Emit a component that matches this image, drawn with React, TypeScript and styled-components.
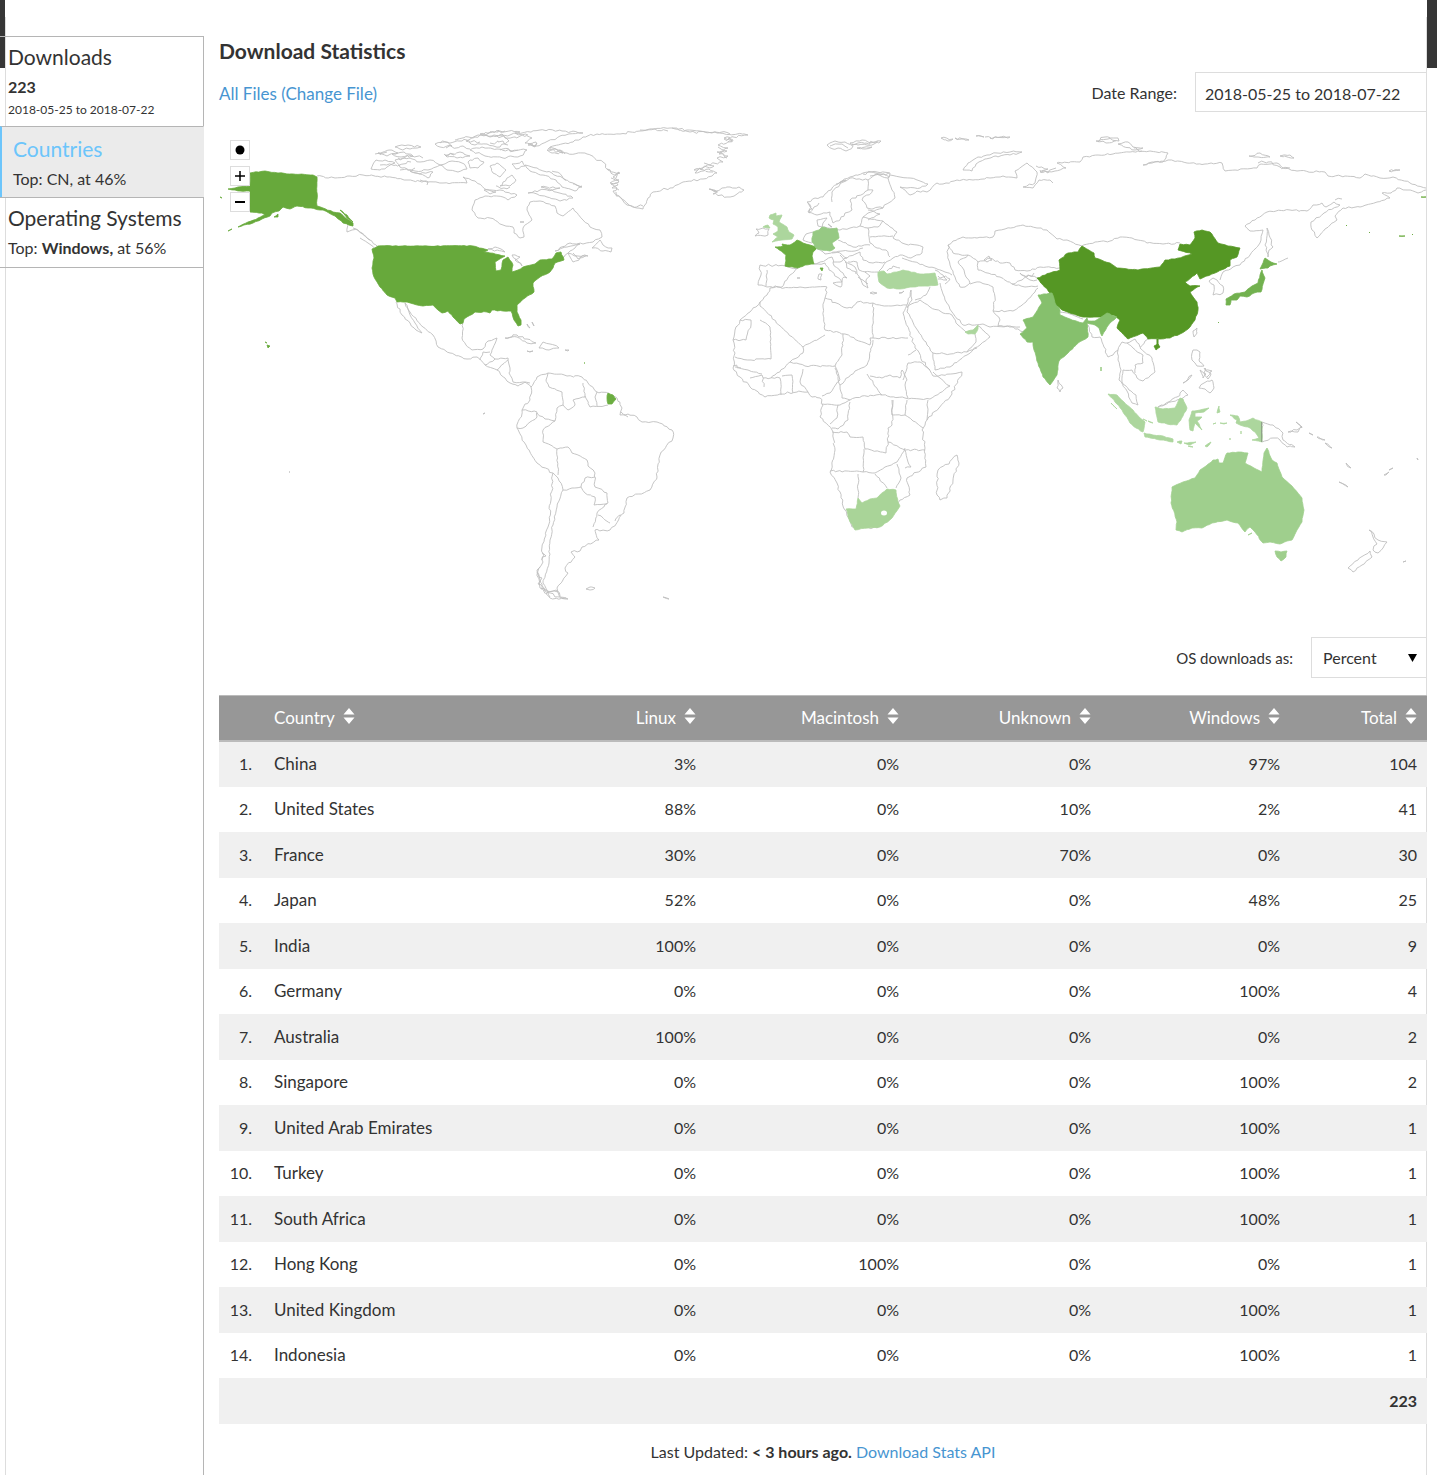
import React from "react";
import styled, { createGlobalStyle } from "styled-components";

const GlobalStyle = createGlobalStyle`
  *, *::before, *::after { box-sizing: border-box; }
  body {
    margin: 0;
    background: #fff;
    color: #333;
    font-family: Lato, "Open Sans", sans-serif;
    font-size: 17px;
    line-height: 24px;
  }
  button, input, select { font: inherit; color: inherit; }
`;

const Page = styled.div`
  min-height: 100vh;
  display: flex;
  padding: 0 10px 0 5px;
  background: linear-gradient(#363636 68px, #fff 68px);
`;

const Sheet = styled.div`
  flex: 1;
  min-width: 0;
  display: flex;
  padding-top: 17px;
  background: #fff;
`;

const Frame = styled.div`
  flex: 1;
  min-width: 0;
  display: flex;
  padding-top: 19px;
  border: solid #ddd;
  border-width: 0 1px;
`;

const Sidebar = styled.nav`
  flex: 0 0 204px;
  margin-left: -6px;
  display: flex;
  flex-direction: column;
`;

const SideItem = styled.a<{ $active?: boolean }>`
  display: block;
  padding: ${(p) => (p.$active ? "9px 0 3px 11px" : "7px 0 4px 8px")};
  border-top: 1px solid #b5b5b5;
  border-right: 1px solid ${(p) => (p.$active ? "#ebebeb" : "#b5b5b5")};
  border-left: ${(p) => (p.$active ? "2px solid #6cc5fb" : "0")};
  background: ${(p) => (p.$active ? "#ebebeb" : "transparent")};
  color: #333;
  text-decoration: none;
`;

const SideTitle = styled.span<{ $active?: boolean }>`
  display: block;
  margin-bottom: 2px;
  font-size: 21px;
  line-height: 26px;
  color: ${(p) => (p.$active ? "#6cc5fb" : "#333")};
`;

const SideText = styled.span`
  display: block;
  font-size: 16px;
  line-height: 30px;
  & > b { font-weight: 700; }
`;

const SideDates = styled.span`
  display: block;
  padding-bottom: 4px;
  font-size: 12px;
  line-height: 16px;
`;

const SideRest = styled.div`
  flex: 1;
  border-top: 1px solid #b5b5b5;
  border-right: 1px solid #b5b5b5;
`;

const Main = styled.main`
  flex: 1;
  min-width: 0;
  margin-right: -1px;
  padding-left: 15px;
`;

const Title = styled.h1`
  margin: 0;
  padding: 3px 0 9px;
  font-size: 21px;
  line-height: 24px;
  font-weight: 700;
`;

const Bar = styled.div<{ $end?: boolean }>`
  display: flex;
  align-items: center;
  justify-content: ${(p) => (p.$end ? "flex-end" : "space-between")};
  margin-bottom: ${(p) => (p.$end ? "17px" : "8px")};
`;

const Link = styled.a`
  color: #4795d1;
  text-decoration: none;
`;

const FileLink = styled(Link)`
  padding-top: 3px;
`;

const Field = styled.label<{ $small?: boolean }>`
  display: flex;
  align-items: center;
  gap: 18px;
  font-size: ${(p) => (p.$small ? "15px" : "16px")};
`;

const FieldName = styled.span`
  padding-top: 2px;
`;

const DateInput = styled.input`
  width: 232px;
  height: 40px;
  padding: 2px 9px 0;
  border: 1px solid #ddd;
  border-radius: 0;
  background: #fff;
  font-size: 16px;
`;

const SelectBox = styled.span`
  position: relative;
  display: flex;
  & > svg {
    position: absolute;
    right: 10px;
    top: 17px;
    pointer-events: none;
  }
`;

const Select = styled.select`
  width: 116px;
  height: 41px;
  padding: 0 28px 0 11px;
  border: 1px solid #ddd;
  border-radius: 0;
  background: #fff;
  appearance: none;
  font-size: 16px;
`;

const MapBox = styled.div`
  position: relative;
  margin-bottom: 27px;
`;

const MapSvg = styled.svg`
  display: block;
  width: 100%;
  height: auto;
`;

const MapControls = styled.div`
  position: absolute;
  left: 11px;
  top: 20px;
  display: grid;
  gap: 6px;
`;

const MapButton = styled.button`
  width: 20px;
  height: 20px;
  padding: 0;
  display: grid;
  place-items: center;
  border: 1px solid #ddd;
  background: #fff;
`;

const Table = styled.table`
  width: 100%;
  table-layout: fixed;
  border-collapse: collapse;
`;

const HeadRow = styled.tr`
  height: 45px;
  background: #979797;
  border-top: 1px solid #bbb;
  border-bottom: 2px solid #bbb;
  color: #fff;
`;

const Row = styled.tr`
  height: 46px;
  &:nth-child(odd) { background: #f0f0f0; }
  &:nth-child(even) { height: 45px; }
`;

const Cell = styled.td<{ $left?: boolean; $bold?: boolean }>`
  padding: 0 10px 0 ${(p) => (p.$left ? "12px" : "0")};
  text-align: ${(p) => (p.$left ? "left" : "right")};
  font-size: ${(p) => (p.$left ? "17px" : "16px")};
  font-weight: ${(p) => (p.$bold ? 700 : 400)};
`;

const SortButton = styled.button`
  display: inline-flex;
  align-items: center;
  gap: 8px;
  padding: 0;
  border: 0;
  background: none;
  font-size: 17px;
  & > svg { margin-bottom: 3px; }
`;

const Footer = styled.p`
  margin: 0;
  padding: 16px 0 10px;
  text-align: center;
  font-size: 16px;
`;

const SortIcon = () => (
  <svg width="12" height="16" viewBox="0 0 12 16" fill="#fff" aria-hidden="true">
    <path d="M6 0 11.500 6.500H.5zM6 16 .5 9.500h11z" />
  </svg>
);

/* ---- World map ---------------------------------------------------------- */

type Point = [number, number];

const parse = (text: string): Point[] =>
  text.trim().split(/\s+/).map((pair) => pair.split(",").map(Number) as Point);

/* Breaks long segments into small uneven ones so that coasts look natural. */
const trace = (text: string, closed: boolean, wobble: number): string => {
  const points = parse(text);
  if (closed) points.push(points[0]);
  let seed = Math.round(points[0][0] * 31 + points[0][1] * 17);
  const random = () => {
    seed = (seed * 1103515245 + 12345) % 2147483648;
    return seed / 2147483648 - 0.5;
  };
  const out: Point[] = [points[0]];
  for (let i = 1; i < points.length; i += 1) {
    const [x0, y0] = points[i - 1];
    const [x1, y1] = points[i];
    const length = Math.hypot(x1 - x0, y1 - y0);
    const parts = Math.max(1, Math.round(length / 3));
    for (let k = 1; k < parts; k += 1) {
      const t = k / parts;
      out.push([x0 + (x1 - x0) * t + random() * wobble, y0 + (y1 - y0) * t + random() * wobble]);
    }
    out.push([x1, y1]);
  }
  return "M" + out.map(([x, y]) => x.toFixed(1) + " " + y.toFixed(1)).join("L") + (closed ? "Z" : "");
};

/* Fjords and small archipelagos, drawn with a stronger wobble. */
const BROKEN: string[] = [
  "611,178 619,180 610,183 618,185 612,188 619,190", "607,169 614,175 619,172 616,178", "616,192 622,199 632,206 643,206",
  "718,147 727,151 719,154 727,158", "704,163 714,166 700,169 713,172", "724,139 733,140 728,142", "710,189 718,192",
  "640,130 655,129 668,131", "672,128 690,132 715,132 730,134",
  "808,203 812,209 809,213 814,207 819,203", "836,184 846,180 840,183", "863,174 872,172 880,174 889,173", "870,176 880,175 890,177",
  "540,567 539,575 542,584 546,592 555,597 566,598", "537,572 542,578 538,584 545,591", "541,589 550,592 558,592", "542,553 546,556 542,560", "546,594 556,590 560,596",
  "830,146 842,144 848,148", "852,144 866,143 878,142", "733,366 741,368", "621,412 628,417",
  "440,143 462,141 480,142", "446,148 463,146 470,149", "497,136 515,137 528,135", "455,140 475,137 488,133 505,131", "528,144 533,146 537,143",
  "380,165 396,165 411,162", "398,158 412,156 423,158", "400,170 415,168", "420,180 428,182 427,185", "375,154 387,152", "444,154 454,155",
  "490,143 503,141 508,145", "500,150 518,150", "496,186 504,188 510,187", "552,171 562,176 566,180", "548,149 560,150 565,154", "573,184 582,186",
  "340,213 346,219 352,223", "858,277 863,280 868,284", "845,262 850,269 856,274", "1204,368 1212,371 1207,377", "1040,170 1048,173 1056,168",
  "985,137 991,138", "1098,142 1108,139 1116,141", "1134,148 1142,151", "1258,163 1268,162 1280,167 1290,168", "1335,200 1342,199",
  "573,253 578,259 586,256", "1020,273 1027,277 1034,273", "938,276 950,279 945,284", "615,521 621,515",
];

const LAND: string[] = [
  // Greenland, Iceland
  "550,150 567,153 587,154 603,162 608,170 620,173 613,177 619,182 611,184 617,188 613,191 619,196 627,205 643,209 648,198 653,192 670,188 683,182 703,179 717,173 709,169 695,173 700,168 694,170 707,165 723,162 717,158 728,156 717,152 728,148 718,145 732,141 724,138 748,135 717,133 687,130 670,128 640,131 620,134 597,134 583,137 573,142 550,147",
  "709,189 716,191 722,188 730,187 739,187 744,190 737,194 727,197 713,194 717,192",
  // Newfoundland, Nova Scotia
  "592,248 600,240 603,245 612,248 611,252 603,251",
  "568,253 573,262 580,258 588,256 578,256",
  // Caribbean
  "505,338 517,335 527,339 536,343 527,343 517,337",
  "539,348 543,342 550,344 559,348 549,350",
  "565,350 569,350 568,351", "527,351 533,351 530,352", "527,324 530,328", "532,322 534,326",
  // South America
  "531,387 537,377 548,373 567,376 582,377 588,383 597,392 608,393 617,398 622,408 620,415 628,414 637,417 642,422 657,422 672,430 673,438 660,455 657,477 650,490 627,498 624,513 610,530 595,530 599,540 582,547 580,551 571,552 575,557 565,568 568,573 557,588 560,597 568,599 550,598 540,588 537,570 543,562 542,547 548,527 551,500 553,473 537,463 526,445 517,428 522,410 530,400",
  "586,589 590,587 595,588 590,590", "663,597 669,599",
  // Ireland, Iberia, Italy, islands
  "763,228 756,229 759,233 755,236 768,235 769,229",
  "785,266 760,265 761,275 758,285 767,287 782,287 790,275 798,268",
  "814,264 825,263 829,270 837,277 842,282 844,277 847,278 840,271 833,263 832,257",
  "833,283 842,282 841,287", "819,274 822,274 821,280 818,279", "870,293 877,293", "899,293 904,291",
  "797,278 800,278",
  // Scandinavia and Finland
  "807,202 815,198 823,197 831,190 840,182 850,177 863,173 877,172 890,173 888,178 892,190 895,198 883,208 867,208 862,200 873,190 868,190 850,200 852,210 845,213 840,220 833,223 830,212 817,215 808,212 811,207",
  "817,220 827,218 823,223 822,227 818,226", "828,224 832,227",
  // Svalbard, Franz Josef Land, Novaya Zemlya
  "827,145 835,141 845,142 853,146 846,151 838,148 833,149", "850,143 862,140 868,142 881,141 874,144 858,145", "857,148 872,147 865,149",
  "941,138 953,139 948,141", "955,138 969,140", "976,136 984,137", "990,138 1010,137",
  "963,170 968,163 973,160 978,157 987,155 997,153 1010,152 1022,152 1010,155 996,156 985,159 976,164 972,171",
  // Severnaya Zemlya, New Siberian Islands, Wrangel
  "1096,141 1105,137 1118,138 1119,141 1106,143", "1118,144 1128,142 1133,147 1143,148 1135,150", "1249,156 1260,153 1270,157 1258,157", "1280,156 1290,155 1294,158", "1389,171 1400,170",
  // Caspian, Aral
  "948,245 953,253 968,255 958,262 964,270 966,277 970,283 965,287 960,287 955,277 950,265 948,255",
  "984,260 989,256 992,260 987,262",
  // Africa
  "770,288 767,295 760,302 750,312 740,320 735,330 733,340 735,353 733,368 740,377 750,387 765,397 780,394 797,392 808,392 812,397 820,398 823,405 820,417 832,430 835,450 830,472 837,483 845,510 852,527 877,528 898,507 900,500 910,495 907,478 926,467 925,448 922,430 927,420 950,397 962,372 933,376 928,368 915,348 903,313 907,305 891,306 873,303 857,302 852,308 847,308 825,298 827,287 800,287",
  "957,455 959,463 953,480 947,498 940,500 937,495 938,470 949,464",
  // Sri Lanka, Taiwan, Korea, Sakhalin
  "1058,380 1063,388 1060,392 1057,388", "1197,328 1197,333 1194,337 1193,331",
  "1213,278 1209,281 1214,285 1213,295 1223,293 1223,286 1217,280",
  "1267,228 1269,235 1273,247 1269,250 1268,257 1265,245",
  // Malaysia, Philippines
  "1158,407 1165,404 1177,397 1183,390 1188,395 1183,398",
  "1193,350 1200,352 1199,360 1204,366 1197,366 1192,360", "1200,370 1206,374 1203,378", "1205,368 1211,374 1208,379 1204,373", "1199,388 1204,383 1212,380 1214,388 1210,393 1205,389", "1183,383 1192,375 1188,380",
  // New Guinea east, Melanesia
  "1262,422 1273,425 1283,433 1283,440 1295,447 1287,447 1280,440 1273,438 1262,442",
  "1288,432 1297,430 1302,426 1298,432", "1296,422 1302,428", "1309,433 1313,435", "1317,437 1325,440", "1325,443 1332,448", "1346,463 1351,468", "1339,482 1348,487", "1384,475 1389,472 1386,475", "1389,470 1393,468", "1417,458 1418,460", "1403,562 1406,561",
  // New Zealand
  "1369,530 1374,534 1378,540 1387,542 1383,548 1378,553 1373,550 1377,544", "1370,551 1372,557 1362,565 1353,572 1348,568 1358,560",
  // Canadian Arctic
  "371,169 376,160 385,160 395,163 387,167 380,170", "378,153 390,150 398,153 387,156", "395,147 408,145 421,147 410,149 400,149", "392,154 404,152 413,156 401,157",
  "395,160 409,158 420,162 430,160 440,165 428,170 415,171 402,168", "410,171 420,174 433,172 428,178 420,174", "435,144 445,142 452,146 440,147", "445,155 460,152 470,156 457,158 447,157",
  "440,165 452,161 462,163 467,169 458,172 447,170", "466,141 478,135 490,137 502,134 509,141 500,147 487,144 475,145", "480,134 500,131 520,132 510,135 492,136", "515,133 540,130 562,131 583,133 560,136 548,141 537,146 525,143 532,138",
  "470,150 482,147 497,149 512,151 527,150 520,156 503,158 485,156", "468,162 478,158 484,162 478,168 470,168", "490,166 497,163 506,170 500,177 493,173", "503,182 512,175 516,180 510,186 500,186",
  "512,164 522,161 525,166 516,169", "525,165 537,168 552,173 565,180 573,183 582,187 575,191 562,187 556,180 543,175 530,171", "528,193 540,190 552,190 563,194 573,198 560,201 547,197 537,194",
  "528,145 536,142 535,147", "547,150 556,149 563,153 552,153", "484,190 496,192 490,194", "541,187 550,190 560,188",
  "488,249 495,247 501,249 505,252", "512,255 520,257 515,260 522,266", "520,222 524,222",
  "483,414 485,413", "289,472 290,472",
];

const LINES: string[] = [
  // Canada mainland and Hudson Bay
  "317,176 335,178 350,176 363,175 387,177 407,180 427,182 443,183 467,183 463,177 475,181 487,190 500,190 517,195 508,200 503,197 485,196 475,200 472,210 478,218 490,218 503,225 513,227 514,233 520,238 524,237 523,228 532,220 527,210 530,202 540,201 555,206 557,213 563,216 573,208 583,220 590,227 600,230 602,237 593,242 583,244 570,243 555,251",
  "353,226 347,223 347,232 352,230 358,230 367,238 378,247", "360,238 368,243 375,249", "353,228 362,233 370,240", "555,251 567,247 580,244 570,251 564,257",
  // Mexico and Central America
  "396,302 402,315 410,323 416,330 422,333 415,323 409,312 405,303 410,312 423,327 433,335 438,347 450,353 467,359 477,357 485,365 497,370 505,378 510,383 518,386 525,382 531,387",
  "463,323 462,338 466,345 472,350 483,349 488,341 497,338 493,348 490,355 495,359 508,358 510,368 509,373 513,382 523,382 530,383", "480,360 483,352 490,352", "485,365 495,359", "497,370 508,360",
  // South American borders
  "553,473 558,478 563,490 557,507 553,525 550,540 549,563 543,583 550,597",
  "557,449 558,475", "543,430 543,442 557,449 568,447 572,453 587,460 588,466 595,473 595,487 607,493 608,503 597,513 593,527", "563,490 581,487 585,478 595,477", "581,487 585,493 595,497 594,505 607,504", "598,515 610,523",
  "517,428 523,428 530,422 537,417 537,412 522,410", "537,413 545,419 555,421 543,430", "555,421 557,408 563,405 562,392 549,387 546,380 548,373", "563,405 568,410 575,405 573,400 585,397 583,383", "585,396 590,407 608,405", "597,406 595,397 597,392",
  // European borders
  "832,202 832,192 840,184 850,178 868,180 868,190", "868,180 876,174 888,178",
  "822,227 840,230 850,228 860,226 863,217 868,213 883,208", "863,217 883,221 888,225 897,232 893,238 905,244 917,245 923,247 922,253 911,258 900,255 893,258 886,262 882,268 879,271",
  "868,228 870,243 877,248 886,250 890,257", "860,226 868,228 878,227 883,221", "870,237 893,236", "838,240 853,247 870,245", "832,253 842,251 855,251 863,248", "818,249 825,254 836,252 847,258 840,262 833,262",
  "840,255 846,262 855,267 857,274 860,278 863,285 868,288 866,280 870,276 865,272 878,272", "847,258 860,252 863,260 873,263 885,262", "848,262 857,262 859,270 866,272", "868,210 880,214 868,220", "803,240 806,234 813,232", "803,240 812,243", "767,270 766,286",
  "900,268 893,266 887,271", "902,258 915,262 925,266 935,268 945,272 952,275", "935,270 943,275 947,280 938,279",
  // Russia
  "890,175 900,177 910,178 920,181 928,184 920,188 907,188 900,187 910,195 917,191 927,192 937,183 943,184 957,180 973,180 990,178 1003,176 1017,178 1015,171 1027,163 1037,172 1035,183 1023,187 1033,188 1039,180 1050,180 1053,183",
  "1036,166 1048,169 1040,172 1055,171 1066,168 1057,163 1062,163 1080,162 1083,157 1098,155 1113,154 1130,152 1150,151 1168,153 1166,158 1163,162 1152,162 1143,165 1168,160 1187,163 1205,164 1222,163 1225,171 1235,170 1257,168 1261,164 1277,163 1283,168 1297,171 1325,172 1328,176 1345,176 1360,178 1365,174 1380,178 1393,177 1410,183 1426,188",
  "1426,190 1418,193 1407,190 1397,188 1391,193 1382,193 1390,198 1377,202 1360,207 1343,208 1335,216 1337,220 1325,229 1317,238 1312,230 1311,222 1324,213 1340,205 1334,202 1326,207 1322,203 1313,205 1307,211 1290,210 1267,212 1255,220 1245,226 1250,231 1263,230 1260,243 1250,255 1240,265 1233,267 1223,272 1220,280",
  // Central Asia
  "948,245 953,241 963,237 977,238 993,237 995,231 1005,229 1023,225 1037,228 1047,230 1057,239 1067,240 1082,246",
  "1082,246 1095,242 1110,241 1120,237 1132,238 1147,243 1163,244 1180,243", "978,262 990,258 1000,263 1010,263 1015,270 1027,271 1040,267 1060,268", "968,255 978,262 978,270 1000,277 1012,284", "1012,284 1022,280 1028,275 1037,278", "970,284 980,282 993,287 995,297 993,311 1013,311 1026,302 1035,292 1038,288",
  "1012,284 1025,287 1038,286", "1020,273 1030,280 1037,280", "993,311 1000,320 998,326 1020,327", "940,283 945,300 952,312 963,325 983,324 990,327 1010,326 1024,332",
  // Middle East
  "907,312 916,328 927,345 933,353 950,354 967,352 980,345 990,337 984,331 978,326", "966,332 958,325 952,315 943,313 930,307 920,300 908,306 907,312", "933,353 935,370 950,367 967,355 977,348", "911,290 912,300 907,308", "930,287 926,295 915,300", "907,305 911,290", "967,352 976,342 975,334",
  // African borders
  "760,302 760,306 803,347 820,338 825,335", "825,298 823,307 825,330 845,334 870,345 870,338 873,338 873,303", "873,338 908,338", "740,320 751,320 751,325 746,340 733,340", "770,327 771,359 751,360 735,357", "770,327 760,320", "803,347 803,353 790,362 775,375 771,378",
  "843,334 842,355 835,366 805,366 790,362", "873,340 867,365 855,371 840,385", "840,385 835,368", "808,392 800,382 803,369", "750,378 762,375 764,387", "763,378 780,378 781,395", "782,376 792,375 793,393", "735,367 748,370 762,374", "835,366 840,380 830,393 822,396",
  "840,385 842,398 850,400 862,396 882,395", "867,374 882,395 905,398 920,399 930,399 950,386 940,378 933,372", "870,376 882,378 890,375 900,378 902,370 907,380 905,385 908,398", "908,363 903,380", "908,363 920,362 930,370", "908,355 913,352 916,350", "892,400 892,415 905,415 923,428", "907,400 905,415", "928,400 927,420", "822,404 840,405 850,400", "838,405 837,418 830,424", "850,402 848,420 838,429 832,428",
  "832,432 847,432 850,437 863,437 865,449 886,453 888,442 905,450 925,450", "893,400 892,425 888,428 888,442", "864,449 863,472 830,471", "863,472 875,473 885,467 897,462 905,448", "858,474 858,498", "875,474 887,488", "897,464 901,478 896,488", "905,450 908,462 911,467 905,468",
  // Himalaya and Indochina
  "1060,312 1070,314 1083,319", "1100,337 1104,347 1108,357 1113,355 1118,350 1118,360 1121,370 1119,380 1127,391 1132,403 1138,405 1136,395 1129,390 1122,382 1123,370 1132,370 1137,378 1143,381 1155,372 1152,358 1140,348 1145,341 1148,339", "1118,350 1122,342 1127,343 1133,348 1143,355 1143,363 1135,365 1135,373", "1127,343 1135,339 1140,347", "1088,325 1092,337 1100,337",
  "1278,262 1288,258",
];

interface Country {
  fill: string;
  shapes: string[];
}

const COUNTRIES: Country[] = [
  {
    // United States
    fill: "#67a93b",
    shapes: [
      "378,246 372,249 374,258 372,268 374,277 380,287 387,295 395,298 397,302 407,302 423,306 433,305 438,310 442,313 448,311 453,317 460,324 463,323 464,319 475,312 487,312 490,313 492,310 503,311 511,311 514,320 518,326 521,325 521,320 517,312 517,305 525,298 534,292 533,283 540,277 550,272 553,268 555,263 564,260 561,252 556,253 552,259 540,260 535,264 523,267 518,270 512,272 513,265 508,257 503,260 501,270 496,271 495,262 505,256 490,253 483,252 488,250 473,246",
      "250,173 265,171 278,173 313,175 317,177 317,206 323,208 333,212 340,213 347,219 353,223 353,226 343,223 335,216 323,210 308,208 297,206 290,209 283,207 279,211 272,213 270,216 262,219 253,223 238,227 248,222 258,218 265,215 262,213 250,212 250,191 240,191 235,190 228,189 238,187 250,186",
      "274,217 278,214 278,217", "228,231 232,229", "220,197 222,198", "265,342 267,343", "267,345 270,346 268,348", "340,210 347,215 353,222 347,218",
    ],
  },
  { fill: "#67a93b", shapes: ["1421,197 1426,197", "1399,236 1405,236", "1412,235 1413,234", "1369,232 1370,233", "1346,226 1347,225"] },
  {
    // France with Corsica and French Guiana
    fill: "#6bad40",
    shapes: [
      "775,247 783,246 782,244 790,245 797,240 803,243 810,245 817,247 813,252 812,256 814,264 805,265 798,268 785,266 786,255",
      "820,268 823,268 822,271", "608,393 613,395 616,399 612,404 608,404 607,398", "584,363 585,363",
    ],
  },
  {
    // United Kingdom
    fill: "#acd69d",
    shapes: ["770,215 776,213 776,216 782,215 779,222 787,227 789,232 794,235 792,239 782,240 772,242 778,237 773,234 778,231 778,227 773,224 774,220 769,218", "763,227 768,225 770,228"],
  },
  { fill: "#96c983", shapes: ["813,232 819,230 822,227 830,229 837,228 839,238 832,243 835,248 830,251 817,249 812,242"] },
  {
    // Turkey, United Arab Emirates
    fill: "#acd69d",
    shapes: ["878,272 884,271 887,274 903,270 920,274 935,273 938,285 925,286 913,287 900,289 887,288 879,282", "965,332 973,330 978,325 978,329 975,334 968,334"],
  },
  {
    // China
    fill: "#559724",
    shapes: [
      "1082,246 1094,253 1095,258 1110,263 1117,268 1138,270 1160,267 1165,260 1175,259 1192,254 1178,250 1180,244 1190,245 1195,238 1194,232 1202,230 1210,232 1218,243 1228,246 1240,248 1237,257 1230,260 1230,266 1215,273 1200,279 1197,273 1185,282 1190,286 1200,286 1190,292 1197,302 1198,310 1195,320 1188,329 1180,334 1170,338 1160,339 1148,339 1143,333 1128,339 1117,328 1120,320 1113,315 1100,317 1083,317 1062,310 1052,302 1050,293 1043,285 1037,278 1050,273 1060,270 1059,260 1068,253 1078,252",
      "1154,346 1158,344 1160,347 1156,350",
    ],
  },
  {
    // India
    fill: "#86c06d",
    shapes: [
      "1038,295 1052,293 1055,303 1060,310 1060,315 1070,319 1083,323 1087,318 1088,321 1095,321 1107,313 1117,317 1110,323 1107,327 1102,336 1099,328 1095,325 1087,323 1088,337 1078,343 1068,353 1059,361 1057,375 1050,385 1043,377 1038,363 1034,350 1033,342 1027,342 1020,334 1027,328 1023,320 1033,317 1042,303",
      "1101,367 1101,371",
    ],
  },
  {
    // Japan
    fill: "#72b14f",
    shapes: [
      "1262,270 1265,278 1261,292 1254,293 1247,297 1240,296 1237,300 1231,300 1230,305 1226,305 1226,299 1234,294 1245,292 1252,286 1258,283 1260,275",
      "1265,258 1271,262 1277,264 1270,266 1268,268 1260,269 1262,265", "1218,323 1219,322",
    ],
  },
  {
    // South Africa
    fill: "#a9d498",
    shapes: ["846,509 856,509 858,498 862,503 870,499 877,498 887,489 896,490 898,502 900,506 892,518 880,527 868,528 855,530 850,522"],
  },
  {
    // Indonesia
    fill: "#acd69d",
    shapes: [
      "1108,394 1117,395 1124,402 1133,410 1139,417 1145,422 1143,432 1136,428 1130,423 1122,410 1115,402", "1144,433 1153,435 1163,436 1173,439 1173,442 1160,440 1145,437",
      "1155,407 1163,409 1175,408 1180,398 1183,399 1187,408 1183,416 1177,425 1167,424 1158,422 1156,413",
      "1192,411 1200,410 1209,408 1204,412 1195,413 1195,417 1202,417 1197,421 1202,430 1195,423 1193,431 1190,430 1189,420",
      "1230,415 1238,416 1240,422 1246,421 1253,418 1262,422 1262,442 1252,440 1259,438 1255,432 1248,427 1240,425 1236,423 1237,420",
      "1177,442 1182,441 1181,444", "1184,443 1196,442 1190,445", "1205,446 1211,442 1207,447", "1188,446 1193,447", "1219,406 1220,412 1217,413", "1213,424 1216,423", "1220,423 1227,423 1224,424", "1241,431 1241,434", "1230,438 1230,440", "1111,403 1117,409", "1148,421 1153,423", "1143,419 1147,421",
    ],
  },
  {
    // Australia
    fill: "#9fcf8d",
    shapes: [
      "1172,487 1183,482 1195,478 1200,470 1206,466 1213,460 1218,459 1219,463 1223,463 1227,453 1238,452 1248,453 1245,463 1254,468 1262,472 1264,453 1267,448 1272,460 1277,463 1282,477 1292,486 1302,498 1304,510 1302,522 1297,530 1292,540 1287,541 1280,544 1270,542 1263,543 1255,532 1250,527 1245,532 1238,523 1227,520 1212,523 1202,528 1192,528 1182,532 1176,530 1177,522 1171,503",
      "1275,551 1281,552 1287,551 1286,557 1281,561 1277,557", "1248,535 1252,533",
    ],
  },
];

const WorldMap = () => (
  <MapSvg viewBox="219 120 1208 490" role="img" aria-label="Downloads by country">
    <g fill="none" stroke="#bebebe" strokeWidth="0.9" strokeLinejoin="round">
      {LAND.map((shape) => (
        <path key={shape} d={trace(shape, true, 2.2)} />
      ))}
      {BROKEN.map((line) => (
        <path key={line} d={trace(line, false, 3.5)} />
      ))}
      {LINES.map((line) => (
        <path key={line} d={trace(line, false, 1.6)} />
      ))}
    </g>
    {COUNTRIES.map((country) => (
      <g key={country.shapes[0]} fill={country.fill} stroke={country.fill} strokeWidth="0.8" strokeLinejoin="round">
        {country.shapes.map((shape) => (
          <path key={shape} d={trace(shape, true, 0.9)} />
        ))}
      </g>
    ))}
    <path d="M378 246.500H473" stroke="#67a93b" />
    <ellipse cx="884" cy="513" rx="3" ry="2.500" fill="#fff" />
    <path d="M1157.500 339V345" stroke="#559724" strokeWidth="2" />
    <path d="M1261.500 422V442" stroke="#8fa388" />
  </MapSvg>
);

/* ---- Data --------------------------------------------------------------- */

const COLUMNS = ["Linux", "Macintosh", "Unknown", "Windows", "Total"];

const ROWS: [string, ...string[]][] = [
  ["China", "3%", "0%", "0%", "97%", "104"],
  ["United States", "88%", "0%", "10%", "2%", "41"],
  ["France", "30%", "0%", "70%", "0%", "30"],
  ["Japan", "52%", "0%", "0%", "48%", "25"],
  ["India", "100%", "0%", "0%", "0%", "9"],
  ["Germany", "0%", "0%", "0%", "100%", "4"],
  ["Australia", "100%", "0%", "0%", "0%", "2"],
  ["Singapore", "0%", "0%", "0%", "100%", "2"],
  ["United Arab Emirates", "0%", "0%", "0%", "100%", "1"],
  ["Turkey", "0%", "0%", "0%", "100%", "1"],
  ["South Africa", "0%", "0%", "0%", "100%", "1"],
  ["Hong Kong", "0%", "100%", "0%", "0%", "1"],
  ["United Kingdom", "0%", "0%", "0%", "100%", "1"],
  ["Indonesia", "0%", "0%", "0%", "100%", "1"],
];

const ColNumber = styled.col`width: 43px;`;
const ColLinux = styled.col`width: 130px;`;
const ColMac = styled.col`width: 203px;`;
const ColUnknown = styled.col`width: 192px;`;
const ColWindows = styled.col`width: 189px;`;
const ColTotal = styled.col`width: 137px;`;

export default function App() {
  return (
    <>
      <GlobalStyle />
      <Page>
        <Sheet>
          <Frame>
            <Sidebar>
              <SideItem href="#downloads">
                <SideTitle>Downloads</SideTitle>
                <SideText><b>223</b></SideText>
                <SideDates>2018-05-25 to 2018-07-22</SideDates>
              </SideItem>
              <SideItem href="#countries" $active aria-current="page">
                <SideTitle $active>Countries</SideTitle>
                <SideText>Top: CN, at 46%</SideText>
              </SideItem>
              <SideItem href="#systems">
                <SideTitle>Operating Systems</SideTitle>
                <SideText>Top: <b>Windows,</b> at 56%</SideText>
              </SideItem>
              <SideRest />
            </Sidebar>
            <Main>
              <Title>Download Statistics</Title>
              <Bar>
                <FileLink href="#files">All Files (Change File)</FileLink>
                <Field>
                  <FieldName>Date Range:</FieldName>
                  <DateInput type="text" readOnly value="2018-05-25 to 2018-07-22" />
                </Field>
              </Bar>
              <MapBox>
                <WorldMap />
                <MapControls>
                  <MapButton type="button" aria-label="Reset view">
                    <svg width="10" height="10"><circle cx="5" cy="5" r="4.500" /></svg>
                  </MapButton>
                  <MapButton type="button" aria-label="Zoom in">
                    <svg width="10" height="10"><path d="M0 5H10M5 0V10" stroke="#000" strokeWidth="1.500" /></svg>
                  </MapButton>
                  <MapButton type="button" aria-label="Zoom out">
                    <svg width="10" height="10"><path d="M0 5H10" stroke="#000" strokeWidth="2" /></svg>
                  </MapButton>
                </MapControls>
              </MapBox>
              <Bar $end>
                <Field $small>
                  OS downloads as:
                  <SelectBox>
                    <Select defaultValue="Percent">
                      <option>Percent</option>
                      <option>Count</option>
                    </Select>
                    <svg width="9" height="8" aria-hidden="true"><path d="M0 0H9L4.500 8Z" /></svg>
                  </SelectBox>
                </Field>
              </Bar>
              <Table>
                <colgroup>
                  <ColNumber />
                  <col />
                  <ColLinux />
                  <ColMac />
                  <ColUnknown />
                  <ColWindows />
                  <ColTotal />
                </colgroup>
                <thead>
                  <HeadRow>
                    <Cell />
                    <Cell as="th" $left scope="col">
                      <SortButton type="button">Country <SortIcon /></SortButton>
                    </Cell>
                    {COLUMNS.map((name) => (
                      <Cell as="th" scope="col" key={name}>
                        <SortButton type="button">{name} <SortIcon /></SortButton>
                      </Cell>
                    ))}
                  </HeadRow>
                </thead>
                <tbody>
                  {ROWS.map(([name, ...values], index) => (
                    <Row key={name}>
                      <Cell>{index + 1}.</Cell>
                      <Cell $left>{name}</Cell>
                      {values.map((value, i) => (
                        <Cell key={COLUMNS[i]}>{value}</Cell>
                      ))}
                    </Row>
                  ))}
                  <Row>
                    <Cell colSpan={6} />
                    <Cell $bold>223</Cell>
                  </Row>
                </tbody>
              </Table>
              <Footer>
                Last Updated: <b>&lt; 3 hours ago.</b> <Link href="#api">Download Stats API</Link>
              </Footer>
            </Main>
          </Frame>
        </Sheet>
      </Page>
    </>
  );
}
